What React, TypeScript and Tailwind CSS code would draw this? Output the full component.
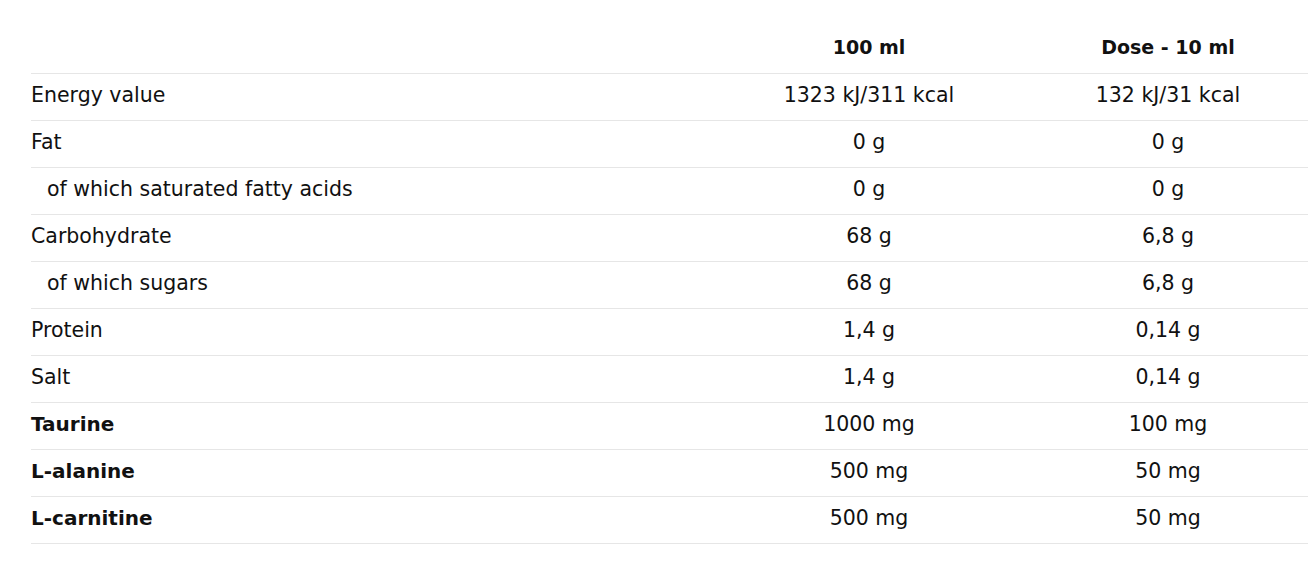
type Row = {
  label: string;
  per100: string;
  dose: string;
  sub?: boolean;
  bold?: boolean;
};

const rows: Row[] = [
  { label: "Energy value", per100: "1323 kJ/311 kcal", dose: "132 kJ/31 kcal" },
  { label: "Fat", per100: "0 g", dose: "0 g" },
  { label: "of which saturated fatty acids", per100: "0 g", dose: "0 g", sub: true },
  { label: "Carbohydrate", per100: "68 g", dose: "6,8 g" },
  { label: "of which sugars", per100: "68 g", dose: "6,8 g", sub: true },
  { label: "Protein", per100: "1,4 g", dose: "0,14 g" },
  { label: "Salt", per100: "1,4 g", dose: "0,14 g" },
  { label: "Taurine", per100: "1000 mg", dose: "100 mg", bold: true },
  { label: "L-alanine", per100: "500 mg", dose: "50 mg", bold: true },
  { label: "L-carnitine", per100: "500 mg", dose: "50 mg", bold: true },
];

const App: React.FC = () => {
  return (
    <div className="min-h-screen bg-white pt-[28px] pl-[31px] pr-[3px] font-['DejaVu_Sans',sans-serif] text-[#111]">
      <div className="grid grid-cols-[1fr_318px_280px] h-[46px] items-center pb-[6px] border-b border-[#e6e6e6] text-[19px] font-bold">
        <div></div>
        <div className="text-center">100 ml</div>
        <div className="text-center">Dose - 10 ml</div>
      </div>
      {rows.map((r) => (
        <div
          key={r.label}
          className="grid grid-cols-[1fr_318px_280px] h-[47px] items-center pb-[4px] border-b border-[#e6e6e6] text-[20.5px]"
        >
          <div className={`${r.sub ? "pl-4" : ""} ${r.bold ? "font-bold text-[20px]" : ""}`}>
            {r.label}
          </div>
          <div className="text-center">{r.per100}</div>
          <div className="text-center">{r.dose}</div>
        </div>
      ))}
    </div>
  );
};

export default App;
